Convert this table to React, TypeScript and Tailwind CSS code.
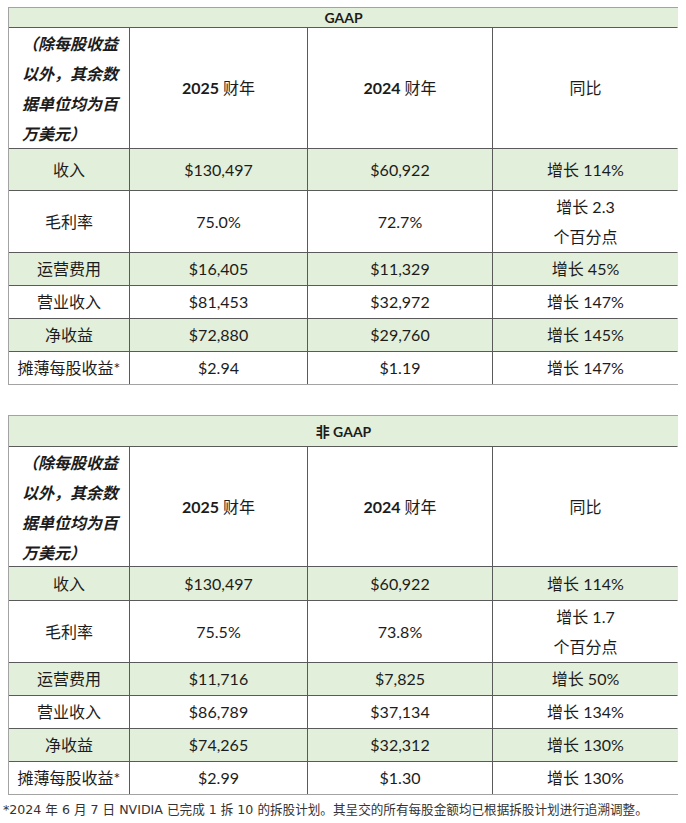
import React from "react";

type Row = {
  label: string;
  fy25: string;
  fy24: string;
  yoy: React.ReactNode;
  green?: boolean;
};

const FONT = "font-['Lato','Noto_Sans_CJK_SC',sans-serif]";

const gaapRows: Row[] = [
  { label: "收入", fy25: "$130,497", fy24: "$60,922", yoy: "增长 114%", green: true },
  {
    label: "毛利率",
    fy25: "75.0%",
    fy24: "72.7%",
    yoy: (
      <>
        增长 2.3
        <br />
        个百分点
      </>
    ),
  },
  { label: "运营费用", fy25: "$16,405", fy24: "$11,329", yoy: "增长 45%", green: true },
  { label: "营业收入", fy25: "$81,453", fy24: "$32,972", yoy: "增长 147%" },
  { label: "净收益", fy25: "$72,880", fy24: "$29,760", yoy: "增长 145%", green: true },
  { label: "摊薄每股收益*", fy25: "$2.94", fy24: "$1.19", yoy: "增长 147%" },
];

const nonGaapRows: Row[] = [
  { label: "收入", fy25: "$130,497", fy24: "$60,922", yoy: "增长 114%", green: true },
  {
    label: "毛利率",
    fy25: "75.5%",
    fy24: "73.8%",
    yoy: (
      <>
        增长 1.7
        <br />
        个百分点
      </>
    ),
  },
  { label: "运营费用", fy25: "$11,716", fy24: "$7,825", yoy: "增长 50%", green: true },
  { label: "营业收入", fy25: "$86,789", fy24: "$37,134", yoy: "增长 134%" },
  { label: "净收益", fy25: "$74,265", fy24: "$32,312", yoy: "增长 130%", green: true },
  { label: "摊薄每股收益*", fy25: "$2.99", fy24: "$1.30", yoy: "增长 130%" },
];

function Cell({ green, children }: { green?: boolean; children: React.ReactNode }) {
  return (
    <div
      className={`flex items-center justify-center text-center leading-[30px] ${
        green ? "bg-[#e2efda]" : "bg-white"
      }`}
    >
      <div>{children}</div>
    </div>
  );
}

function ResultsTable({
  title,
  rows,
  rowsTemplate,
}: {
  title: string;
  rows: Row[];
  rowsTemplate: string;
}) {
  return (
    <div
      className={`mx-[8px] grid grid-cols-[120px_177px_184px_185px] gap-px border border-[#a3a3a3] bg-[#5a5a5a] text-[16px] text-[#1c1c1c] ${rowsTemplate}`}
    >
      <div className="col-span-4 flex items-center justify-center bg-[#e2efda] text-[14px] font-bold">
        {title}
      </div>

      {/* units note, wraps in the original so the breaks are kept by hand */}
      <div className="bg-white pl-[13px] pt-[1px] text-left text-[16px] leading-[30px] font-bold italic">
        （除每股收益
        <br />
        以外，其余数
        <br />
        据单位均为百
        <br />
        万美元）
      </div>
      <Cell>
        <span className="font-bold">2025</span> 财年
      </Cell>
      <Cell>
        <span className="font-bold">2024</span> 财年
      </Cell>
      <Cell>同比</Cell>

      {rows.map((r) => (
        <React.Fragment key={r.label}>
          <Cell green={r.green}>{r.label}</Cell>
          <Cell green={r.green}>{r.fy25}</Cell>
          <Cell green={r.green}>{r.fy24}</Cell>
          <Cell green={r.green}>{r.yoy}</Cell>
        </React.Fragment>
      ))}
    </div>
  );
}

export default function App() {
  return (
    <div className={`min-h-screen bg-white pt-[7px] ${FONT}`}>
      <ResultsTable
        title="GAAP"
        rows={gaapRows}
        rowsTemplate="grid-rows-[19px_120px_41px_61px_32px_32px_32px_32px]"
      />
      <div className="h-[30px]" />
      <ResultsTable
        title="非 GAAP"
        rows={nonGaapRows}
        rowsTemplate="grid-rows-[30px_119px_33px_61px_32px_32px_32px_32px]"
      />
      <p className="ml-[3px] mt-[5px] whitespace-nowrap font-['DejaVu_Sans','Noto_Sans_CJK_SC',sans-serif] text-[12.6px] leading-[20px] text-[#333]">
        *2024 年 6 月 7 日 NVIDIA 已完成 1 拆 10 的拆股计划。其呈交的所有每股金额均已根据拆股计划进行追溯调整。
      </p>
    </div>
  );
}
